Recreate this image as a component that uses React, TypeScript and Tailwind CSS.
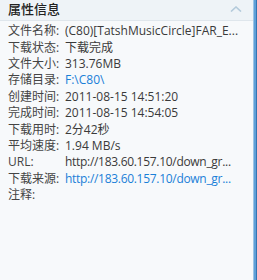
import { ReactNode } from "react";

type Row = { label: string; value: ReactNode; link?: boolean; tight?: boolean };

const rows: Row[] = [
  { label: "文件名称:", value: "(C80)[TatshMusicCircle]FAR_E..." },
  { label: "下载状态:", value: "下载完成" },
  { label: "文件大小:", value: "313.76MB" },
  { label: "存储目录:", value: "F:\\C80\\", link: true },
  { label: "创建时间:", value: "2011-08-15 14:51:20" },
  { label: "完成时间:", value: "2011-08-15 14:54:05" },
  { label: "下载用时:", value: "2分42秒" },
  { label: "平均速度:", value: "1.94 MB/s" },
  { label: "URL:", value: "http://183.60.157.10/down_gr...", tight: true },
  { label: "下载来源:", value: "http://183.60.157.10/down_gr...", link: true, tight: true },
  { label: "注释:", value: "" },
];

const App = () => {
  return (
    <div
      className="flex h-[280px] w-[257px] bg-[#f7f9fb] text-[#333]"
      style={{ fontFamily: '"Open Sans", "Noto Sans CJK SC", sans-serif' }}
    >
      <div className="flex min-w-0 flex-1 flex-col">
        <div className="flex h-[21px] items-center justify-between border-b border-[#dfe6ec] bg-[#eef3f7] pl-[8px] pr-[11px]">
          <span className="text-[13px] font-medium text-[#222]">属性信息</span>
          <svg width="12" height="6" viewBox="0 0 12 6" className="mb-[2px]">
            <path d="M1 5.5 L6 1 L11 5.5" fill="none" stroke="#b3cadb" strokeWidth="1.6" />
          </svg>
        </div>
        <div className="flex flex-col pl-[8px] pr-[4px] pt-[2px]">
          {rows.map((r) => (
            <div key={r.label} className="flex h-[16.4px] items-center text-[12px] leading-[16px]">
              <span className="w-[57px] shrink-0 text-[#444]">{r.label}</span>
              <span
                className={
                  "min-w-0 flex-1 overflow-hidden whitespace-nowrap " +
                  (r.tight ? "tracking-[-0.3px] " : "") +
                  (r.link ? "text-[#1a80d8]" : "text-[#3a3a3a]")
                }
              >
                {r.value}
              </span>
            </div>
          ))}
        </div>
      </div>
      <div className="flex w-[4px] shrink-0">
        <div className="w-[1px] bg-[#9cc4e6]" />
        <div className="w-[2px] bg-[#5e9fd8]" />
        <div className="w-[1px] bg-[#3474b2]" />
      </div>
    </div>
  );
};

export default App;
